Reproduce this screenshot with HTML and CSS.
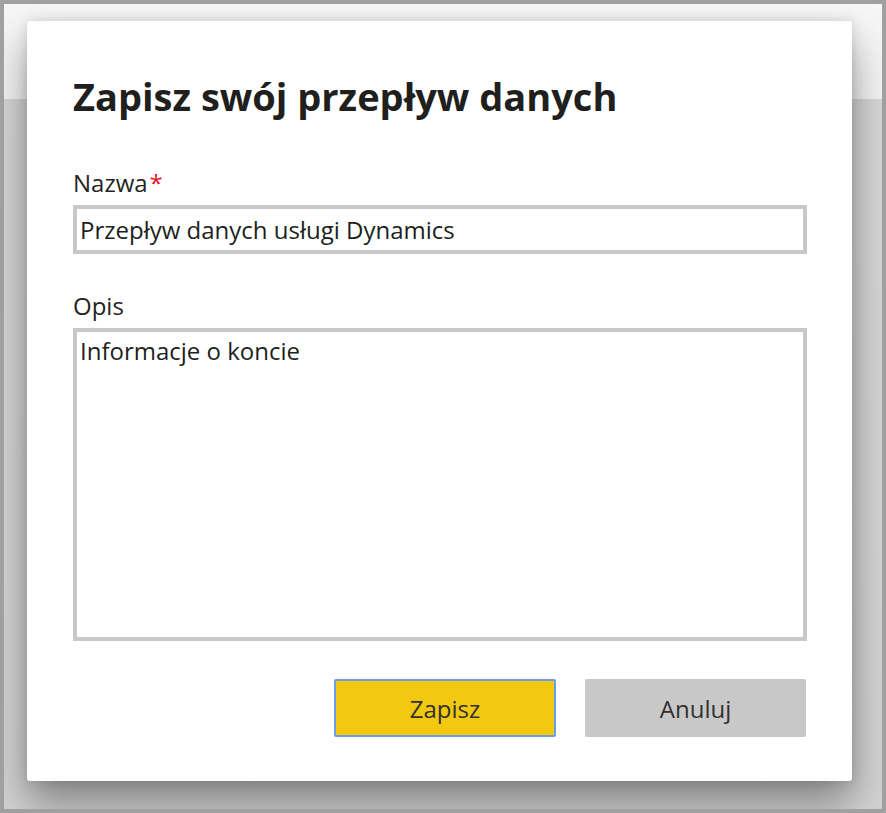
FILE: index.html
```html
<!DOCTYPE html>
<html lang="pl">
<head>
<meta charset="utf-8">
<title>Zapisz swój przepływ danych</title>
<link rel="stylesheet" href="styles.css">
</head>
<body>
<div class="frame">
  <div class="dialog">
    <h1 class="title">Zapisz swój przepływ danych</h1>
    <div class="field">
      <label class="label">Nazwa<span class="req">*</span></label>
      <div class="input">Przepływ danych usługi Dynamics</div>
    </div>
    <div class="field field-desc">
      <label class="label">Opis</label>
      <div class="textarea">Informacje o koncie</div>
    </div>
    <div class="actions">
      <button class="btn btn-primary">Zapisz</button>
      <button class="btn btn-secondary">Anuluj</button>
    </div>
  </div>
</div>
</body>
</html>
```
FILE: styles.css
```css
* { box-sizing: border-box; }
html, body { margin: 0; padding: 0; }
body {
  width: 886px;
  height: 813px;
  font-family: "Open Sans", "Noto Sans", sans-serif;
  color: #252423;
}
.frame {
  width: 886px;
  height: 813px;
  border: 4px solid #a0a0a0;
  background: linear-gradient(to bottom, #f6f6f6 0, #f3f3f3 95px, #d6d6d6 95px, #d2d2d2 100%);
  padding: 17px 0 0 23px;
  overflow: hidden;
}
.dialog {
  width: 825px;
  height: 760px;
  background: #ffffff;
  border-radius: 3px;
  box-shadow: 0 22px 40px rgba(0, 0, 0, 0.38), 0 0 12px rgba(0, 0, 0, 0.12);
  padding: 0 45px 0 46px;
  display: flex;
  flex-direction: column;
}
.title {
  margin: 50px 0 0 0;
  font-size: 38px;
  line-height: 50px;
  font-weight: 700;
  color: #201f1e;
}
.field {
  margin-top: 46px;
  display: flex;
  flex-direction: column;
}
.field-desc { margin-top: 36px; }
.label {
  font-size: 24px;
  line-height: 32px;
  color: #252423;
  margin-bottom: 6px;
}
.req {
  color: #e81123;
  margin-left: 2px;
}
.input {
  height: 49px;
  border: 4px solid #c8c8c8;
  padding: 6px 3px 0 3px;
  font-size: 24px;
  line-height: 30px;
  color: #201f1e;
}
.textarea {
  height: 313px;
  border: 4px solid #c8c8c8;
  padding: 4px 3px 0 3px;
  font-size: 24px;
  line-height: 30px;
  color: #201f1e;
}
.actions {
  margin-top: 38px;
  display: flex;
  justify-content: flex-end;
  gap: 29px;
  padding-right: 1px;
}
.btn {
  width: 222px;
  height: 58px;
  font-family: "Open Sans", "Noto Sans", sans-serif;
  font-size: 24px;
  color: #323130;
  border: none;
  border-radius: 2px;
  padding: 0;
}
.btn-primary {
  background: #f2c811;
  border: 2px solid #6a9ff0;
}
.btn-secondary {
  background: #c8c8c8;
  width: 221px;
}
```
